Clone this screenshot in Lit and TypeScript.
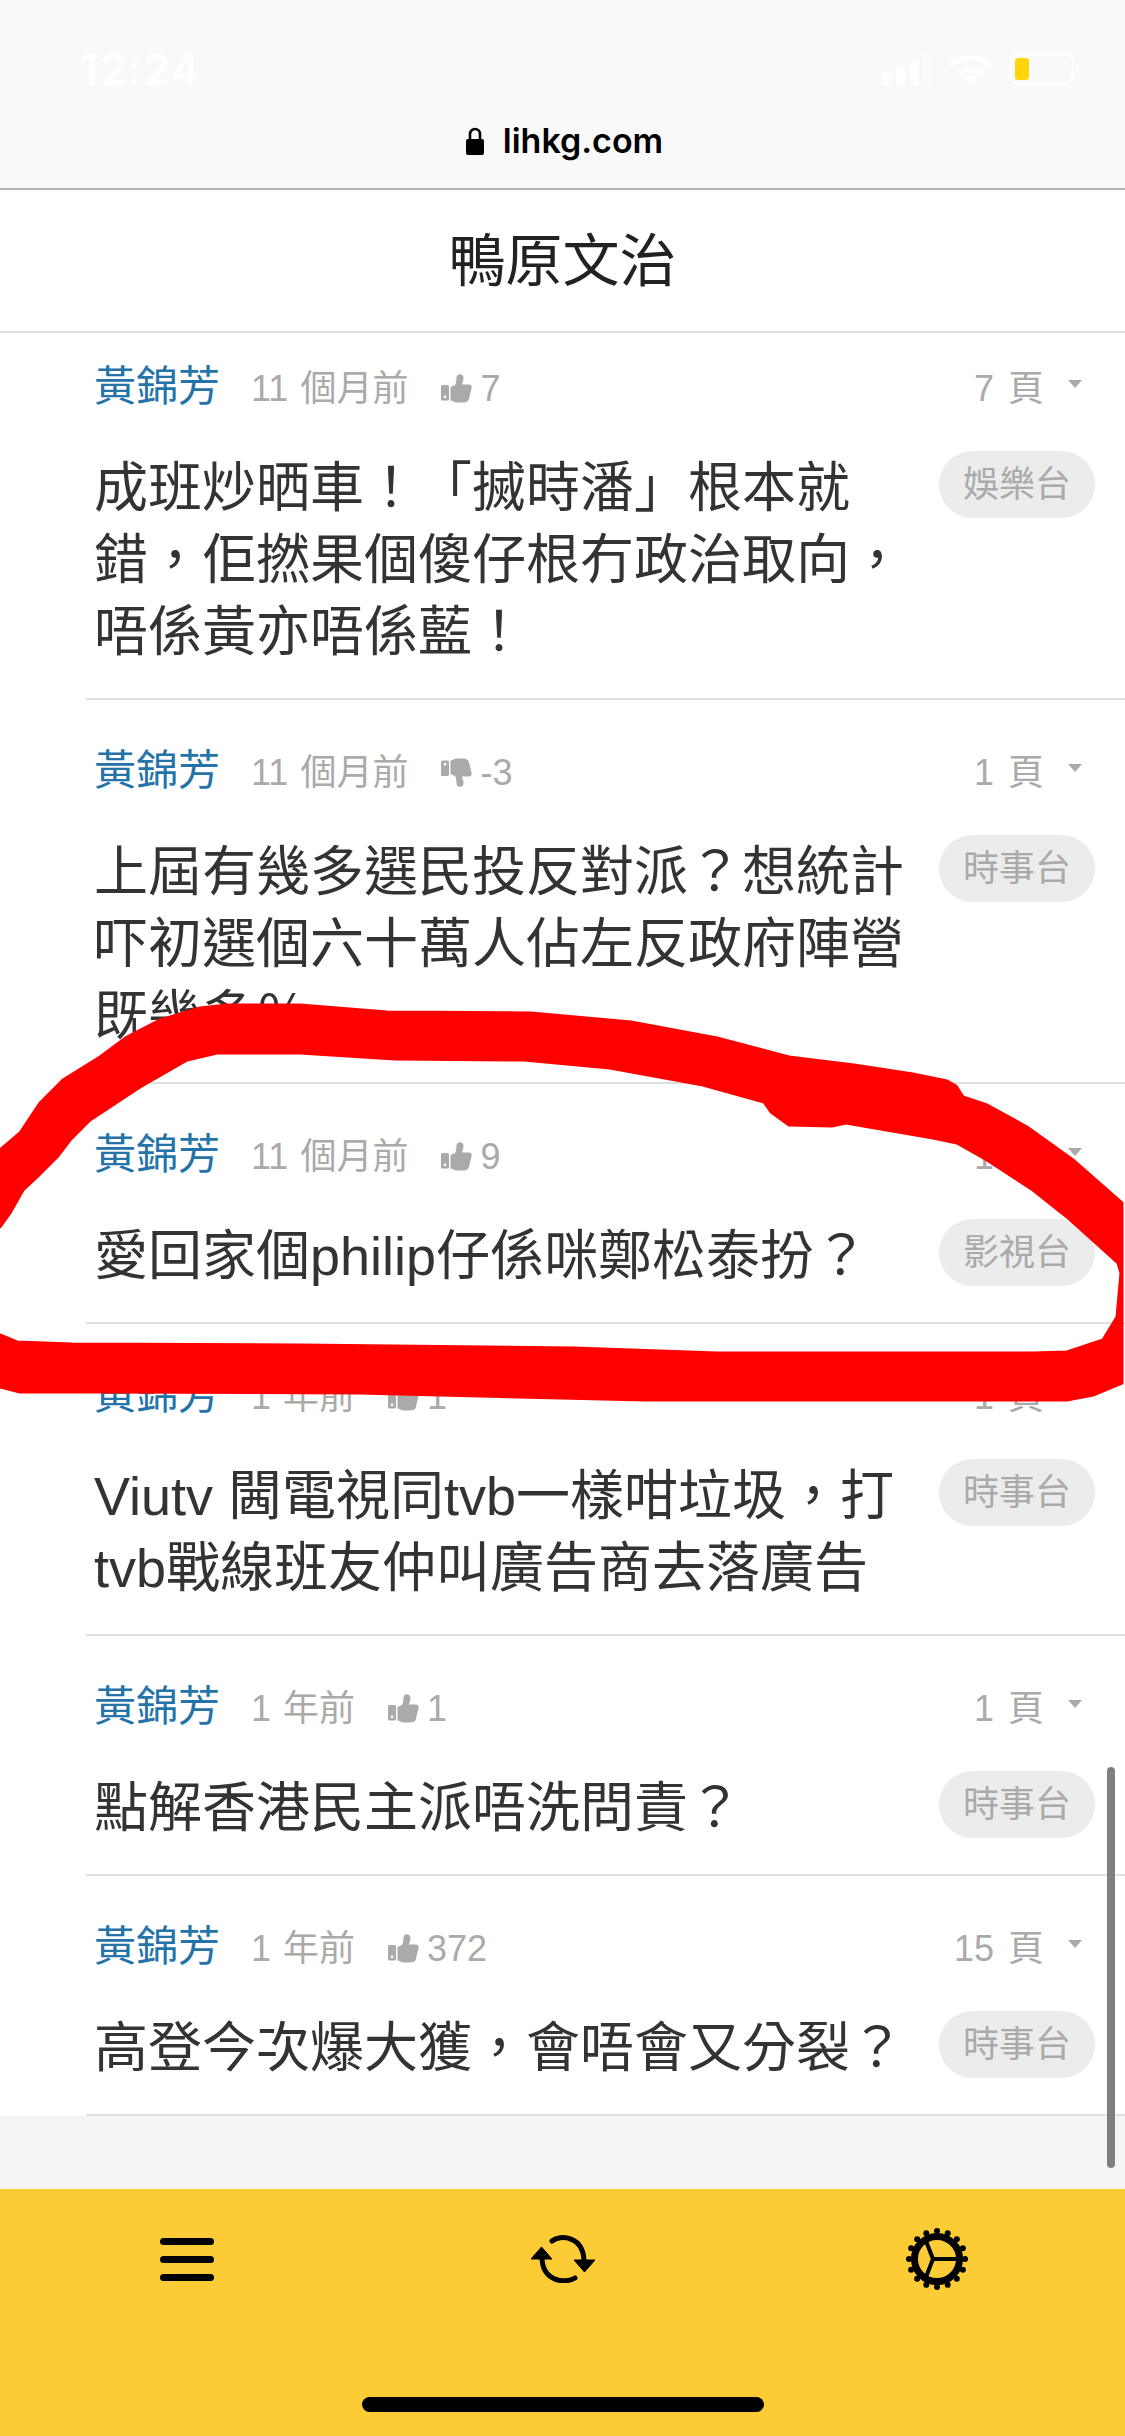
import {LitElement, html, css, svg} from 'lit';
import {customElement} from 'lit/decorators.js';

interface Thread {
  time: string;
  votes: number;
  pages: number;
  title: string;
  tag: string;
}

const threads: Thread[] = [
  {time: '11 個月前', votes: 7, pages: 7, title: '成班炒晒車！「搣時潘」根本就錯，佢撚果個傻仔根冇政治取向，唔係黃亦唔係藍！', tag: '娛樂台'},
  {time: '11 個月前', votes: -3, pages: 1, title: '上屆有幾多選民投反對派？想統計吓初選個六十萬人佔左反政府陣營既幾多％', tag: '時事台'},
  {time: '11 個月前', votes: 9, pages: 1, title: '愛回家個philip仔係咪鄭松泰扮？', tag: '影視台'},
  {time: '1 年前', votes: 1, pages: 1, title: 'Viutv 閪電視同tvb一樣咁垃圾，打tvb戰線班友仲叫廣告商去落廣告', tag: '時事台'},
  {time: '1 年前', votes: 1, pages: 1, title: '點解香港民主派唔洗問責？', tag: '時事台'},
  {time: '1 年前', votes: 372, pages: 15, title: '高登今次爆大獲，會唔會又分裂？', tag: '時事台'},
];

// traced from the marker scribble: outer edge, then back along the inner edge
const SCRIBBLE =
  'M0 1150 L20 1133 L40 1103 L63 1080 L100 1057 L127 1037 L160 1020 L200 1008 L227 1005 L300 1005 ' +
  'L387 1012 L531 1013 L631 1022 L717 1038 L789 1057 L854 1065 L913 1074 L947 1081 L956 1086 L963 1097 ' +
  'L987 1105 L1027 1127 L1073 1160 L1122 1203 L1122 1383 L1093 1395 L1067 1400 L717 1400 L645 1400 ' +
  'L359 1393 L93 1392 L20 1392 L0 1387 L0 1335 L17 1342 L72 1344 L300 1345 L574 1348 L717 1353 ' +
  'L1033 1353 L1067 1352 L1103 1340 L1117 1317 L1121 1273 L1118 1263 L1067 1217 L1033 1190 L987 1160 ' +
  'L957 1143 L933 1138 L846 1123 L832 1126 L789 1125 L771 1112 L764 1102 L703 1085 L610 1068 L524 1060 ' +
  'L395 1059 L300 1053 L217 1053 L187 1060 L140 1087 L90 1120 L70 1140 L57 1157 L37 1177 L23 1190 L10 1213 L0 1227 Z';

const thumb = (down: boolean) => html`
  <svg class="thumb ${down ? 'down' : ''}" viewBox="0 0 31 29">
    <path d="M0 12.5 Q0 11 1.5 11 H6.5 Q8 11 8 12.5 V25 Q8 26.5 6.5 26.5 H1.5 Q0 26.5 0 25 Z M4 21.5 a1.4 1.4 0 1 0 .01 0 Z" fill-rule="evenodd"/>
    <path d="M9.5 13 L14 11 C16 8 15 4 16 1.8 C18 -1 22.5 0 22.5 4 C22.5 7 21 9 21 10.5 L27.5 10.5 C30.5 10.5 31 12.5 30.5 14.5 L28 24.5 C27.5 27.5 25 28.5 22 28.5 L15 28.5 C12.5 28 11.5 26.5 9.5 26.5 Z"/>
  </svg>`;

const gearTeeth = Array.from({length: 16}, (_, i) => {
  const a = (i / 16) * Math.PI * 2;
  return svg`<circle cx=${31 + Math.cos(a) * 28} cy=${31 + Math.sin(a) * 28} r="3"/>`;
});

@customElement('app-root')
export class AppRoot extends LitElement {
  static styles = css`
    :host {
      display: flex;
      flex-direction: column;
      position: relative;
      width: 1125px;
      height: 2436px;
      overflow: hidden;
      background: #f5f5f5;
      font-family: "Liberation Sans", "Noto Sans CJK TC", sans-serif;
    }
    .browser {
      box-sizing: border-box;
      height: 190px;
      flex: none;
      background: #f9f9f9;
      border-bottom: 2px solid #b4b4b4;
      display: flex;
      flex-direction: column;
    }
    .status {
      display: flex;
      justify-content: space-between;
      align-items: center;
      height: 32px;
      margin-top: 53px;
      padding: 0 43px 0 80px;
    }
    .clock {
      font: 600 44px Inter, sans-serif;
      letter-spacing: 1px;
      color: #fff;
    }
    .status svg {
      display: block;
    }
    .url {
      display: flex;
      justify-content: center;
      align-items: center;
      gap: 19px;
      margin-top: 35px;
      padding-left: 4px;
      font: 600 34px Inter, sans-serif;
      color: #000;
    }
    .page-title {
      box-sizing: border-box;
      height: 143px;
      flex: none;
      display: flex;
      justify-content: center;
      align-items: center;
      padding-bottom: 9px;
      background: #fff;
      border-bottom: 2px solid #e0e0e0;
      font-size: 57px;
      color: #222;
    }
    .list {
      flex: 1;
      min-height: 0;
      overflow: hidden;
    }
    .rows {
      margin-top: -17px;
    }
    .row {
      padding-left: 86px;
      background: #fff;
    }
    .row-inner {
      padding: 36px 30px 30px 8px;
      border-bottom: 2px solid #e0e0e0;
    }
    .meta {
      display: flex;
      align-items: baseline;
      height: 72px;
      font-size: 36px;
      word-spacing: 2px;
      color: #aaa;
    }
    .name {
      font-size: 42px;
      color: #2574a9;
      margin-right: 31px;
    }
    .thumb {
      align-self: center;
      width: 31px;
      height: 29px;
      fill: #aaa;
      margin: 0 8px 0 33px;
    }
    .thumb.down {
      transform: scaleY(-1);
    }
    .pages {
      margin-left: auto;
      word-spacing: 4px;
    }
    .caret {
      align-self: center;
      width: 0;
      height: 0;
      margin: 0 13px 8px 24px;
      border-left: 7px solid transparent;
      border-right: 7px solid transparent;
      border-top: 8px solid #aaa;
    }
    .body {
      display: flex;
      gap: 11px;
      margin-top: 27px;
    }
    .title {
      flex: 1;
      min-width: 0;
      padding-top: 1px;
      font-size: 54px;
      line-height: 72px;
      color: #333;
    }
    .tag {
      flex: none;
      box-sizing: border-box;
      width: 156px;
      height: 67px;
      line-height: 67px;
      border-radius: 34px;
      background: #ececec;
      color: #aaa;
      font-size: 36px;
      text-align: center;
    }
    .footer {
      box-sizing: border-box;
      flex: none;
      height: 247px;
      background: #fbcc36;
      display: flex;
      flex-direction: column;
      align-items: center;
    }
    .tools {
      align-self: stretch;
      display: flex;
      justify-content: space-between;
      align-items: center;
      height: 62px;
      margin-top: 39px;
      padding: 0 157px 0 160px;
    }
    .refresh {
      margin-left: 6px;
    }
    .menu {
      display: flex;
      flex-direction: column;
      gap: 11px;
    }
    .menu span {
      display: block;
      width: 54px;
      height: 7px;
      border-radius: 4px;
      background: #000;
    }
    .home {
      width: 402px;
      height: 15px;
      margin-top: 107px;
      border-radius: 8px;
      background: #000;
    }
    .scrollbar {
      position: absolute;
      left: 1107px;
      top: 1767px;
      width: 8px;
      height: 401px;
      border-radius: 4px;
      background: #7f7f7f;
    }
    .scribble {
      position: absolute;
      left: 0;
      top: 0;
      pointer-events: none;
    }
  `;

  renderStatus() {
    return html`
      <div class="status">
        <span class="clock">12:24</span>
        <svg width="200" height="32" viewBox="0 0 200 32">
          <g fill="#fff">
            <rect x="0" y="20" width="9" height="12" rx="2.5"/>
            <rect x="14" y="14" width="9" height="18" rx="2.5"/>
            <rect x="28" y="7" width="9" height="25" rx="2.5"/>
            <rect x="41" y="0" width="9" height="32" rx="2.5" opacity=".3"/>
            <path d="M89 32 l-7 -7 a10 10 0 0 1 14 0 Z"/>
            <path d="M75 20 a20 20 0 0 1 28 0 l-4 4 a14 14 0 0 0 -20 0 Z"/>
            <path d="M67 11 a31 31 0 0 1 44 0 l-4 4 a25 25 0 0 0 -36 0 Z"/>
          </g>
          <rect x="129" y="1" width="62" height="30" rx="8" fill="none" stroke="#fff" stroke-width="2.5"/>
          <rect x="133" y="5" width="14" height="22" rx="3.5" fill="#ffd60a"/>
          <path d="M194 10 q6 6 0 12 Z" fill="#fff"/>
        </svg>
      </div>`;
  }

  renderThread(t: Thread) {
    return html`
      <div class="row">
        <div class="row-inner">
          <div class="meta">
            <span class="name">黃錦芳</span>
            <span>${t.time}</span>
            ${thumb(t.votes < 0)}
            <span>${t.votes}</span>
            <span class="pages">${t.pages} 頁</span>
            <span class="caret"></span>
          </div>
          <div class="body">
            <div class="title">${t.title}</div>
            <div class="tag">${t.tag}</div>
          </div>
        </div>
      </div>`;
  }

  render() {
    return html`
      <div class="browser">
        ${this.renderStatus()}
        <div class="url">
          <svg width="18" height="28" viewBox="0 0 18 28">
            <path d="M2 12 H16 Q18 12 18 14 V26 Q18 28 16 28 H2 Q0 28 0 26 V14 Q0 12 2 12 Z"/>
            <path d="M4 13 V7 a5 5 0 0 1 10 0 V13" fill="none" stroke="#000" stroke-width="2.6"/>
          </svg>
          <span>lihkg.com</span>
        </div>
      </div>
      <div class="page-title">鴨原文治</div>
      <div class="list">
        <div class="rows">${threads.map((t) => this.renderThread(t))}</div>
      </div>
      <div class="footer">
        <div class="tools">
          <div class="menu"><span></span><span></span><span></span></div>
          <svg class="refresh" width="64" height="48" viewBox="31 25 64 48">
            <path d="M52 31 C60 24 84 26 84 52" fill="none" stroke="#000" stroke-width="5" stroke-linecap="round"/>
            <path d="M74 50 H95 L84.5 62 Z" stroke="#000" stroke-linejoin="round"/>
            <path d="M42 47 C42 72 66 74 75 68" fill="none" stroke="#000" stroke-width="5" stroke-linecap="round"/>
            <path d="M31 49 H52 L41.5 37 Z" stroke="#000" stroke-linejoin="round"/>
          </svg>
          <svg width="62" height="62" viewBox="0 0 62 62">
            ${gearTeeth}
            <circle cx="31" cy="31" r="22.5" fill="none" stroke="#000" stroke-width="7"/>
            <path d="M27 31 H50 M27 31 L20 13 M27 31 L20 49" fill="none" stroke="#000" stroke-width="4"/>
          </svg>
        </div>
        <div class="home"></div>
      </div>
      <div class="scrollbar"></div>
      <svg class="scribble" width="1125" height="2436" viewBox="0 0 1125 2436">
        <path d=${SCRIBBLE} fill="#ff0000" stroke="#ff0000" stroke-width="3" stroke-linejoin="round"/>
      </svg>
    `;
  }
}
